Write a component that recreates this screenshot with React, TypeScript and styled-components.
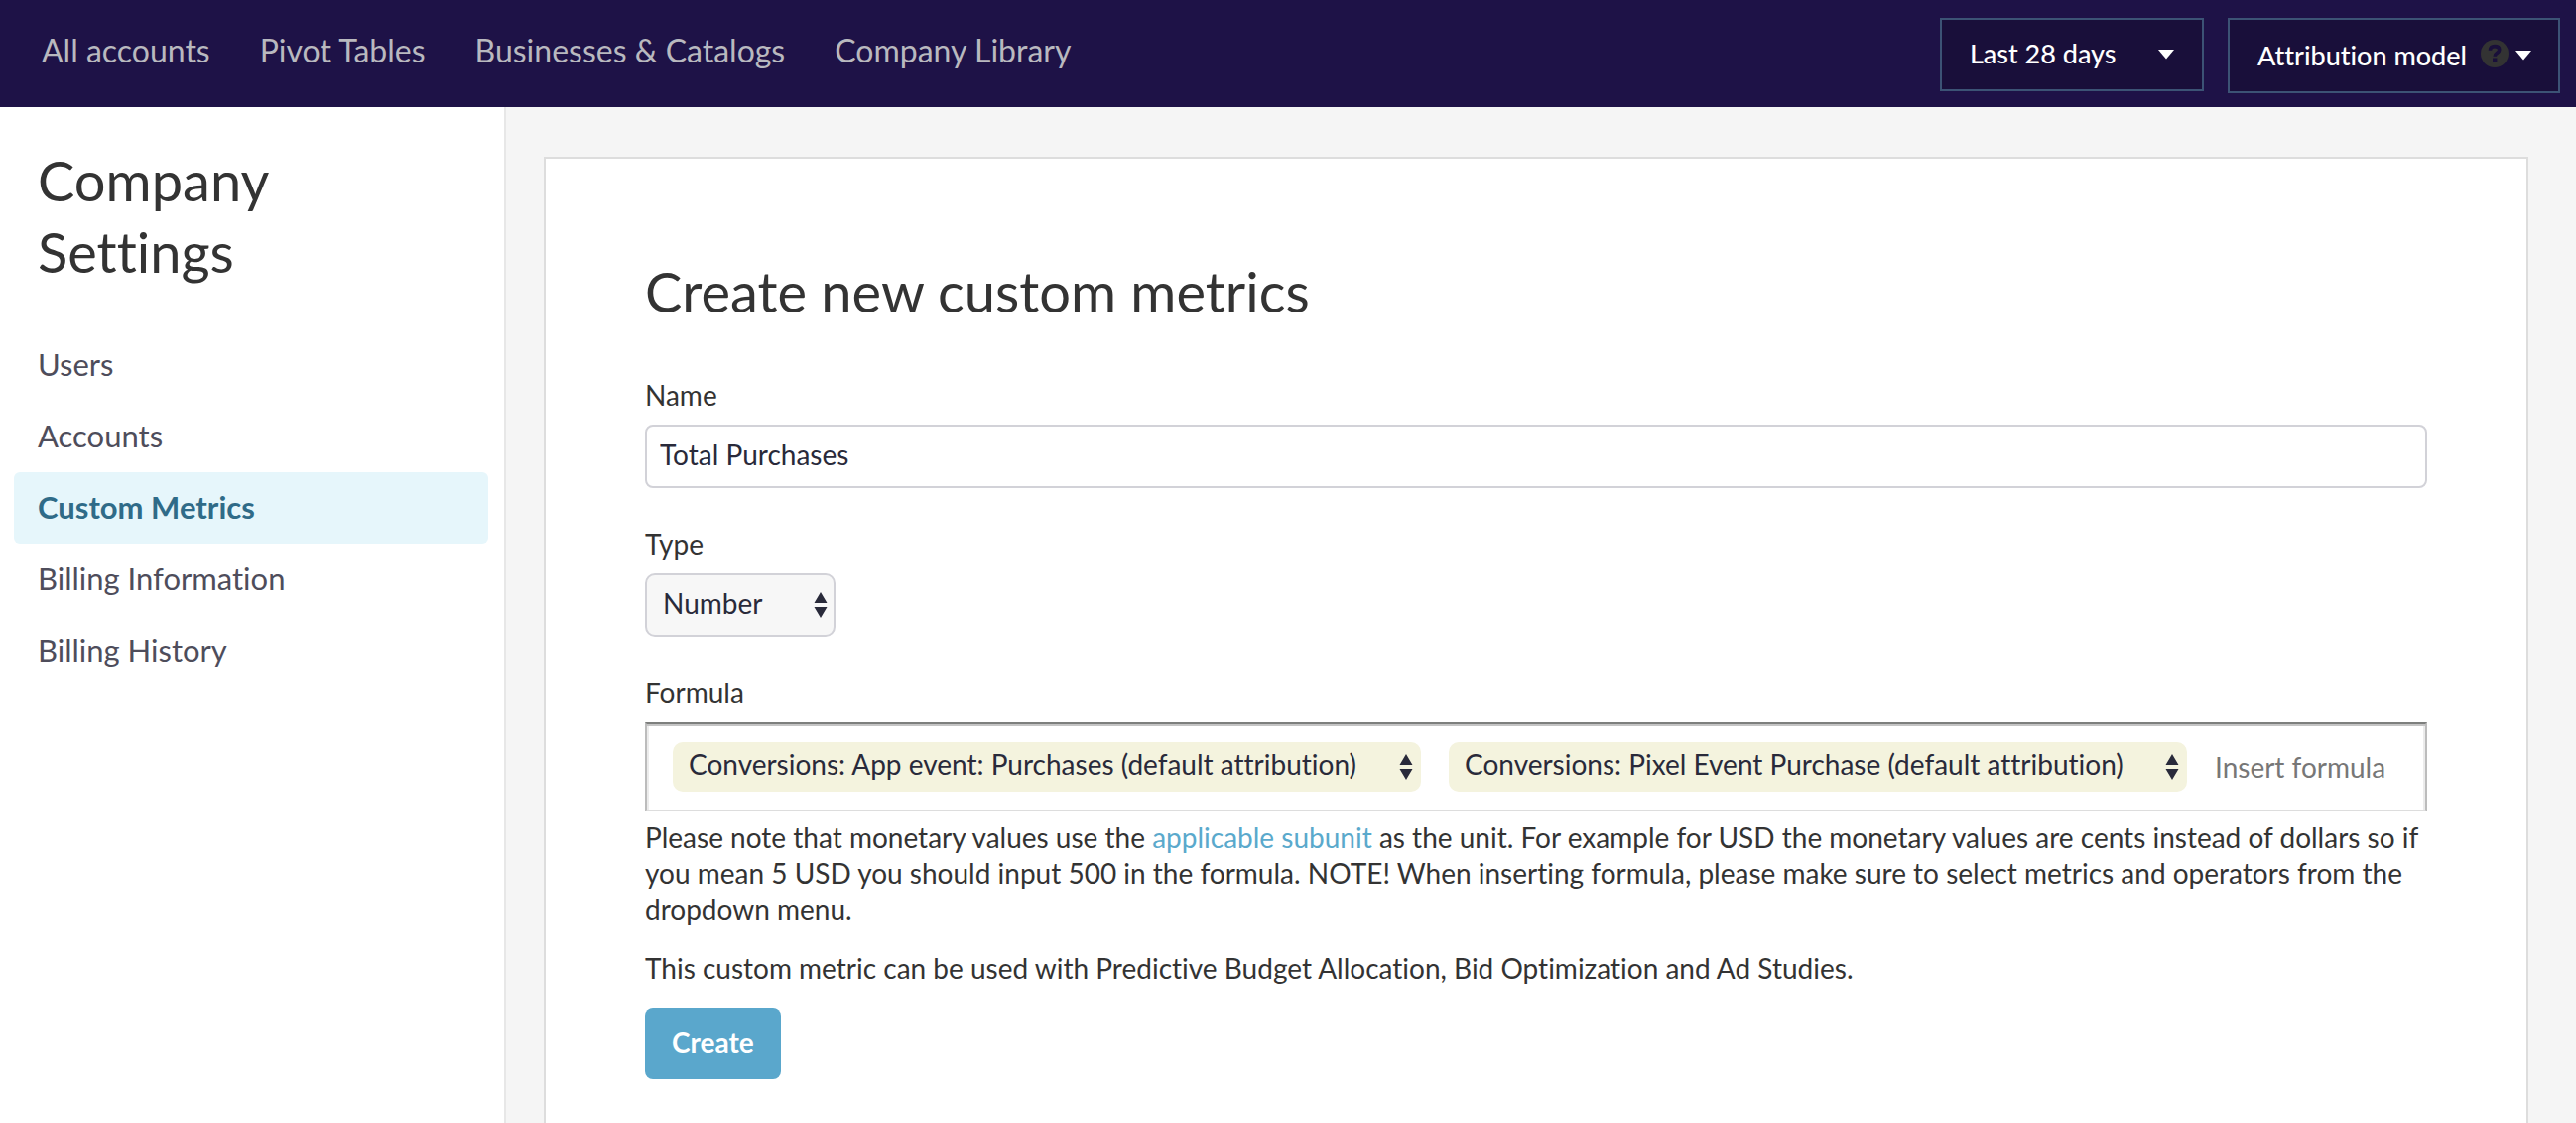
import React, { useState } from "react";
import styled, { createGlobalStyle } from "styled-components";

const GlobalStyle = createGlobalStyle`
  *, *::before, *::after {
    box-sizing: border-box;
  }
  body {
    margin: 0;
    background: #f5f5f5;
    color: #333;
    font-family: Lato, "Liberation Sans", sans-serif;
    font-size: 28px;
    line-height: 36px;
    font-variant-ligatures: none;
  }
  h1, h2, p, ul {
    margin: 0;
    padding: 0;
  }
  button, input, select {
    font: inherit;
    font-variant-ligatures: none;
    margin: 0;
  }
`;

const Page = styled.div`
  display: flex;
  flex-direction: column;
  min-height: 100vh;
`;

const Header = styled.header`
  display: flex;
  justify-content: space-between;
  align-items: flex-start;
  min-height: 108px;
  padding: 18px 16px 0 42px;
  background: #1e1247;
`;

const Nav = styled.nav`
  display: flex;
  gap: 50px;
  padding-top: 15px;
`;

const NavLink = styled.a`
  color: #b9b9bf;
  font-size: 32px;
  text-decoration: none;
`;

const HeaderControls = styled.div`
  display: flex;
  align-items: flex-start;
  gap: 24px;
`;

const SelectWrap = styled.div`
  position: relative;
  display: inline-flex;
`;

const SelectIcon = styled.svg<{ $right: number }>`
  position: absolute;
  top: 50%;
  right: ${(p) => p.$right}px;
  transform: translateY(-50%);
  pointer-events: none;
`;

const RangeSelect = styled.select`
  appearance: none;
  height: 74px;
  padding: 0 86px 2px 28px;
  border: 2px solid #3c5375;
  border-radius: 0;
  background: #190f3a;
  color: #fff;
  font-size: 27px;
  font-weight: 500;
`;

const ModelButton = styled.button`
  display: flex;
  align-items: center;
  height: 76px;
  padding: 0 26px 0 28px;
  border: 2px solid #3c5375;
  background: #190f3a;
  color: #fff;
  font-size: 27px;
  font-weight: 500;

  svg:first-of-type {
    margin: 0 6px 4px 14px;
  }
`;

const Body = styled.div`
  display: flex;
  flex: 1;
`;

const Sidebar = styled.aside`
  flex: 0 0 510px;
  padding: 38px 16px 0 14px;
  border-right: 2px solid #e7e7e7;
  background: #fff;
`;

const Title = styled.h1`
  font-size: 56px;
  font-weight: 400;
  line-height: 72px;
`;

const SidebarTitle = styled(Title)`
  max-width: 320px;
  margin: 0 0 42px;
  padding-left: 24px;
`;

const Menu = styled.ul`
  list-style: none;
`;

const MenuLink = styled.a<{ $active?: boolean }>`
  display: flex;
  align-items: center;
  height: 72px;
  padding: 0 24px 3px;
  border-radius: 6px;
  background: ${(p) => (p.$active ? "#e6f6fb" : "transparent")};
  color: ${(p) => (p.$active ? "#2f6b88" : "#4e4d5b")};
  font-size: 31px;
  font-weight: ${(p) => (p.$active ? 700 : 400)};
  text-decoration: none;
`;

const Main = styled.main`
  display: flex;
  flex: 1;
  min-width: 0;
  padding: 50px 48px 0 38px;
`;

const Card = styled.form`
  flex: 1;
  min-width: 0;
  padding: 98px 100px 42px;
  border: 2px solid #ddd;
  border-bottom: 0;
  background: #fff;
`;

const CardTitle = styled(Title)`
  margin-bottom: 50px;
`;

const Field = styled.div`
  display: flex;
  flex-direction: column;
  align-items: flex-start;
  gap: 12px;

  & + & {
    margin-top: 38px;
  }
`;

const TextInput = styled.input`
  width: 100%;
  height: 64px;
  padding: 0 13px 4px;
  border: 2px solid #d2d2d8;
  border-radius: 8px;
  background: #fff;
  color: #292a3a;
`;

const TypeSelect = styled.select`
  appearance: none;
  height: 64px;
  padding: 0 71px 4px 16px;
  border: 2px solid #d2d2d8;
  border-radius: 10px;
  background: #f7f7f7;
  color: #292a3a;
`;

const FormulaBox = styled.div`
  display: flex;
  align-items: flex-start;
  gap: 28px;
  width: 100%;
  height: 90px;
  padding: 18px 26px 0;
  border: 2px solid;
  border-color: #7d7f7d #bcbcbc #ddd;
  box-shadow: inset 0 2px 0 #c4c4c4, inset 2px 0 0 #ececec, inset -2px 0 0 #ececec;
`;

const ChipSelect = styled.select`
  appearance: none;
  height: 50px;
  padding: 0 64px 6px 16px;
  border: 0;
  border-radius: 10px;
  background: #f4f3de;
  color: #292a3a;
`;

const FormulaInput = styled.input`
  flex: 1;
  width: 0;
  min-width: 0;
  height: 50px;
  padding: 0;
  border: 0;
  background: transparent;
  color: #292a3a;

  &::placeholder {
    color: #777;
    opacity: 1;
  }
`;

const Notes = styled.div`
  display: flex;
  flex-direction: column;
  gap: 24px;
  margin: 8px 0 22px;
`;

const NoteLink = styled.a`
  color: #5aa9cc;
  text-decoration: none;
`;

const CreateButton = styled.button`
  height: 72px;
  padding: 0 27px 4px;
  border: 0;
  border-radius: 8px;
  background: #5aa7cc;
  color: #fff;
  font-weight: 700;
`;

const HelpIcon = () => (
  <svg width="28" height="28" viewBox="0 0 28 28" aria-hidden="true">
    <circle cx="14" cy="14" r="14" fill="#333" />
    <path
      d="M9.500 10.800C9.500 7.600 11.400 6.600 14 6.600s4.700 1.200 4.700 3.600c0 3.200-4.500 3.100-4.500 6.600"
      fill="none"
      stroke="#190f3a"
      strokeWidth="3.600"
    />
    <rect x="12" y="18.500" width="4.400" height="4.400" fill="#190f3a" />
  </svg>
);

const Caret = () => (
  <svg width="18" height="10" viewBox="0 0 18 10" aria-hidden="true">
    <path d="M1 0h16L9 9.500z" fill="#fff" />
  </svg>
);

const UpDown = () => (
  <SelectIcon $right={8} width="14" height="26" viewBox="0 0 14 26" aria-hidden="true">
    <path d="M7 0l6.500 11H.5zM.5 15h13L7 26z" fill="#292a3a" />
  </SelectIcon>
);

const NAV = ["All accounts", "Pivot Tables", "Businesses & Catalogs", "Company Library"];
const MENU = ["Users", "Accounts", "Custom Metrics", "Billing Information", "Billing History"];
const METRICS = [
  "Conversions: App event: Purchases (default attribution)",
  "Conversions: Pixel Event Purchase (default attribution)",
];

export default function App() {
  const [name, setName] = useState("Total Purchases");

  return (
    <Page>
      <GlobalStyle />
      <Header>
        <Nav aria-label="Main">
          {NAV.map((item) => (
            <NavLink key={item} href="#">{item}</NavLink>
          ))}
        </Nav>
        <HeaderControls>
          <SelectWrap>
            <RangeSelect aria-label="Date range">
              <option>Last 28 days</option>
            </RangeSelect>
            <SelectIcon $right={29} width="18" height="10" viewBox="0 0 18 10" aria-hidden="true">
              <path d="M1 0h16L9 9.500z" fill="#fff" />
            </SelectIcon>
          </SelectWrap>
          <ModelButton type="button" aria-haspopup="true">
            Attribution model
            <HelpIcon />
            <Caret />
          </ModelButton>
        </HeaderControls>
      </Header>
      <Body>
        <Sidebar>
          <SidebarTitle>Company Settings</SidebarTitle>
          <Menu>
            {MENU.map((item) => (
              <li key={item}>
                <MenuLink
                  href="#"
                  $active={item === "Custom Metrics"}
                  aria-current={item === "Custom Metrics" ? "page" : undefined}
                >
                  {item}
                </MenuLink>
              </li>
            ))}
          </Menu>
        </Sidebar>
        <Main>
          <Card onSubmit={(e) => e.preventDefault()}>
            <CardTitle as="h2">Create new custom metrics</CardTitle>
            <Field>
              <label htmlFor="name">Name</label>
              <TextInput id="name" value={name} onChange={(e) => setName(e.target.value)} />
            </Field>
            <Field>
              <label htmlFor="type">Type</label>
              <SelectWrap>
                <TypeSelect id="type">
                  <option>Number</option>
                </TypeSelect>
                <UpDown />
              </SelectWrap>
            </Field>
            <Field>
              <label htmlFor="formula">Formula</label>
              <FormulaBox>
                {METRICS.map((metric, i) => (
                  <SelectWrap key={metric}>
                    <ChipSelect aria-label={`Metric ${i + 1}`}>
                      <option>{metric}</option>
                    </ChipSelect>
                    <UpDown />
                  </SelectWrap>
                ))}
                <FormulaInput id="formula" placeholder="Insert formula" />
              </FormulaBox>
            </Field>
            <Notes>
              <p>
                Please note that monetary values use the <NoteLink href="#">applicable subunit</NoteLink> as
                the unit. For example for USD the monetary values are cents instead of dollars so if you mean
                5 USD you should input 500 in the formula. NOTE! When inserting formula, please make sure to
                select metrics and operators from the dropdown menu.
              </p>
              <p>This custom metric can be used with Predictive Budget Allocation, Bid Optimization and Ad Studies.</p>
            </Notes>
            <CreateButton type="submit">Create</CreateButton>
          </Card>
        </Main>
      </Body>
    </Page>
  );
}
